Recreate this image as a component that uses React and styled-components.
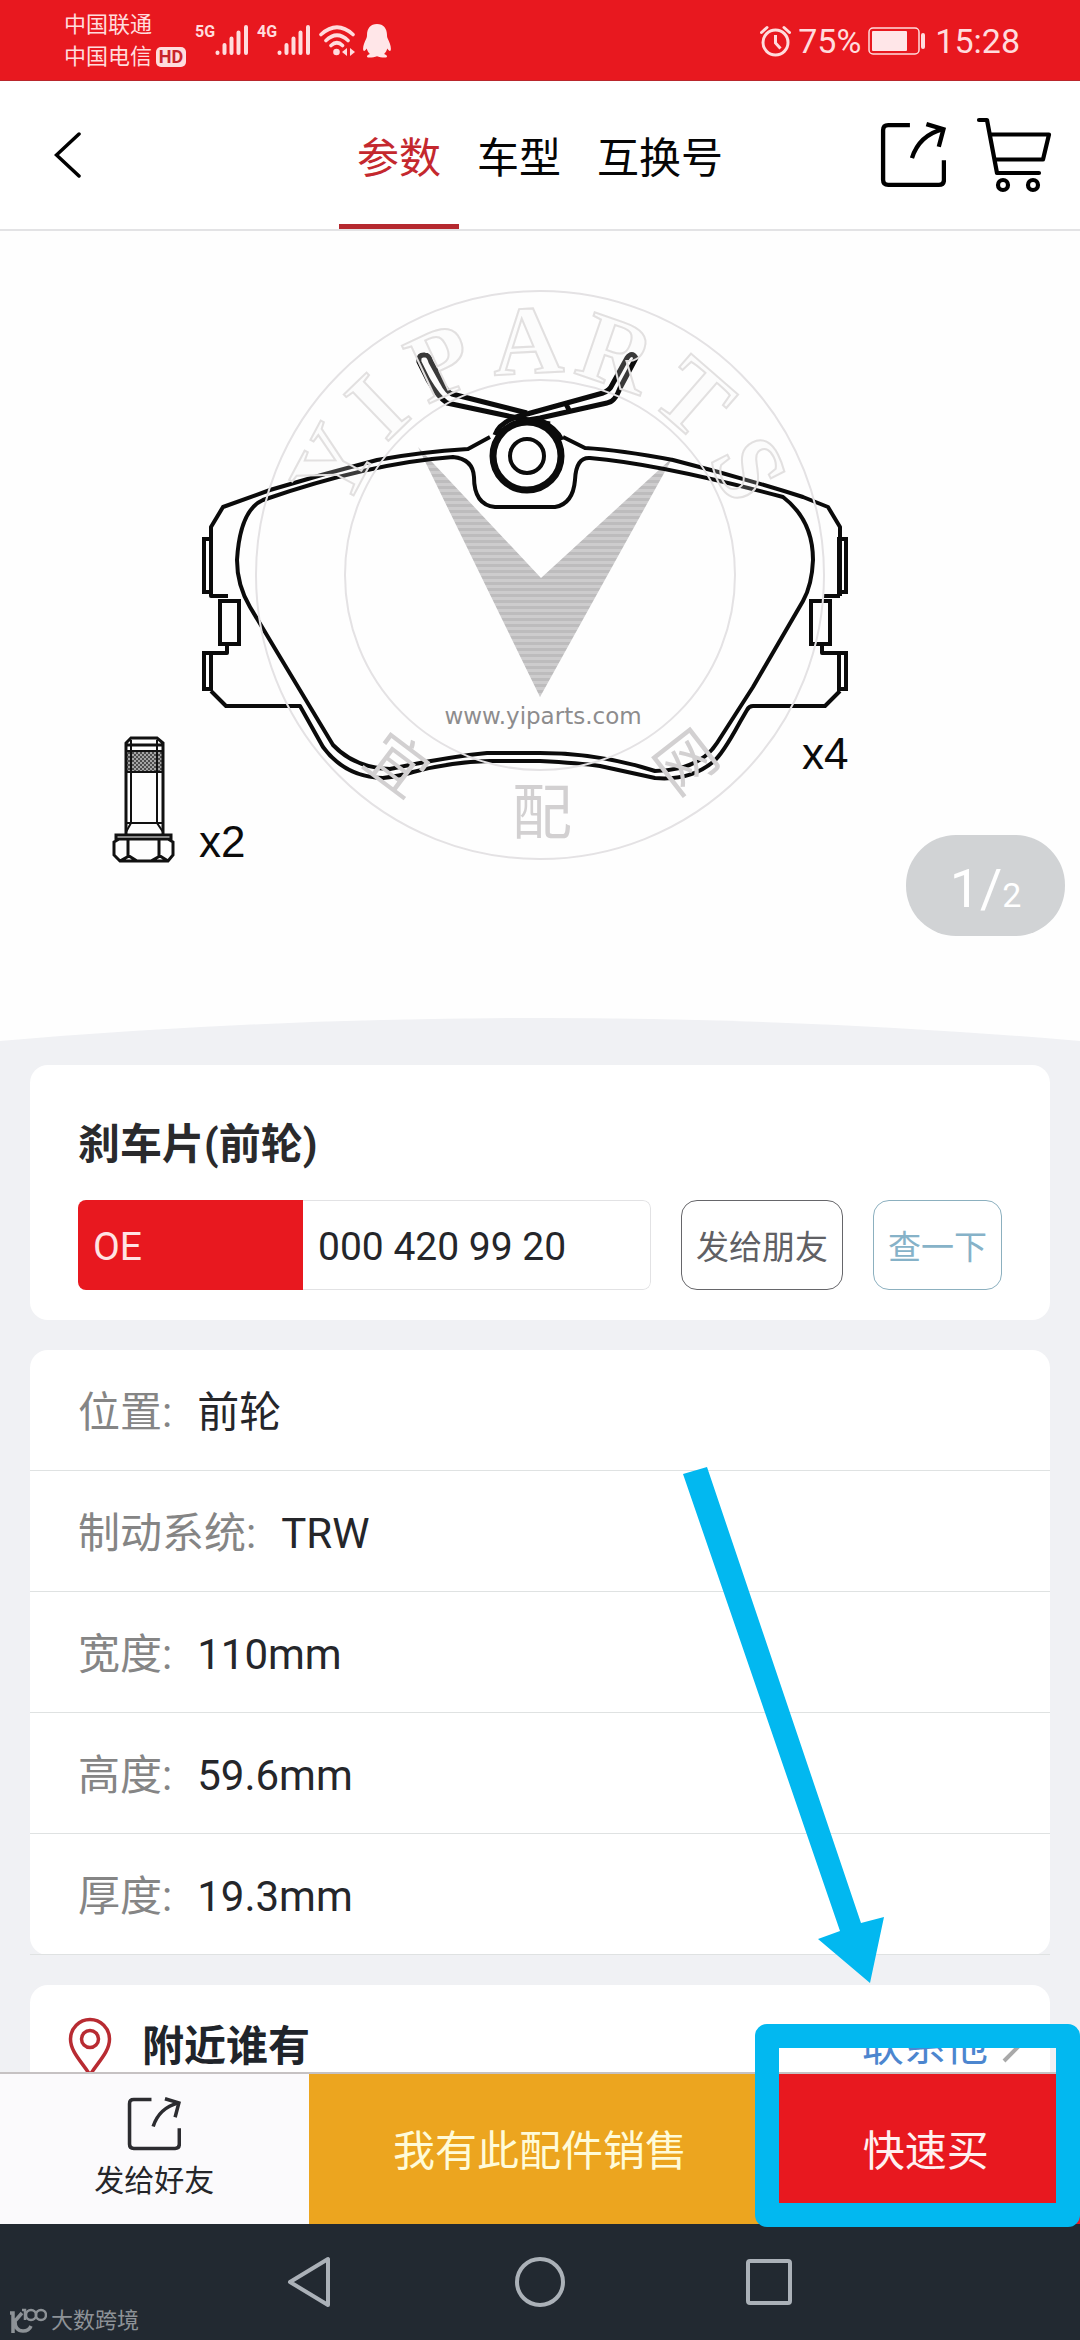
import React from "react";
import styled, { createGlobalStyle } from "styled-components";

const GlobalStyle = createGlobalStyle`
  *, *::before, *::after { box-sizing: border-box; }
  body {
    margin: 0;
    background: #f0f1f4;
    color: #25262a;
    font-family: Roboto, "Noto Sans CJK SC", sans-serif;
  }
  button, input {
    margin: 0;
    padding: 0;
    border: 0;
    background: none;
    color: inherit;
    font: inherit;
    cursor: pointer;
  }
  a { color: inherit; text-decoration: none; }
  svg { display: block; flex: none; }
`;

const Page = styled.div`
  display: flex;
  flex-direction: column;
  height: 100vh;
  overflow: hidden;
`;

/* ---------- status bar ---------- */

const StatusBar = styled.div`
  flex: none;
  display: flex;
  align-items: flex-start;
  justify-content: space-between;
  height: 81px;
  padding: 9px 60px 0 64px;
  background: #e8181f;
  border-bottom: 1px solid #b9262c;
  color: #ffdcdd;
`;

const StatusGroup = styled.div`
  display: flex;
  align-items: ${(p) => p.$align || "center"};
  gap: ${(p) => p.$gap}px;
`;

const Carriers = styled.div`
  display: flex;
  flex-direction: column;
  font-size: 22px;
  line-height: 32px;
`;

const Carrier = styled.div`
  display: flex;
  align-items: center;
  gap: 4px;
`;

const HdBadge = styled.span`
  width: 30px;
  border-radius: 5px;
  background: #ffdcdd;
  color: #c8242a;
  font-size: 18px;
  font-weight: 700;
  line-height: 20px;
  text-align: center;
`;

const Radios = styled.div`
  display: flex;
  align-items: flex-start;
  gap: 8px;
  padding-top: 15px;
`;

const Signal = styled.div`
  display: flex;
  align-items: flex-start;
  font-size: 16px;
  font-weight: 700;
  line-height: 16px;
`;

const StatusInfo = styled(StatusGroup)`
  padding-top: 14px;
  font-size: 34px;
  line-height: 36px;
`;

/* ---------- header ---------- */

const Header = styled.header`
  flex: none;
  display: grid;
  grid-template-columns: 1fr auto 1fr;
  align-items: center;
  height: 150px;
  background: #fff;
  border-bottom: 2px solid #e3e3e5;
`;

const IconButton = styled.button`
  display: block;
`;

const HeaderStart = styled.div`
  padding-left: 54px;
`;

const Tabs = styled.nav`
  align-self: stretch;
  display: flex;
`;

const Tab = styled.a`
  display: flex;
  align-items: center;
  padding: 12px 18px 0;
  border-bottom: 5px solid ${(p) => (p.$active ? "#b5292f" : "transparent")};
  color: ${(p) => (p.$active ? "#c4282e" : "#060606")};
  font-size: 42px;
  line-height: 60px;
`;

const HeaderActions = styled.div`
  display: flex;
  align-items: center;
  justify-content: flex-end;
  gap: 30px;
  padding-right: 28px;
`;

/* ---------- content ---------- */

const Main = styled.main`
  flex: 1;
  min-height: 0;
  overflow: hidden;
`;

const Hero = styled.section`
  position: relative;
  background: #fefefe;

  > svg {
    width: 100%;
    height: auto;
  }
`;

const Counter = styled.div`
  position: absolute;
  right: 15px;
  bottom: 105px;
  display: flex;
  align-items: baseline;
  justify-content: center;
  width: 159px;
  height: 101px;
  border-radius: 50px;
  background: #d1d3d5;
  color: #fff;
  font-size: 34px;
  line-height: 107px;
`;

const CounterCurrent = styled.span`
  font-size: 54px;
`;

const Cards = styled.div`
  display: flex;
  flex-direction: column;
  gap: 30px;
  padding: 24px 30px;
`;

const Card = styled.section`
  background: #fff;
  border-radius: 18px;
`;

const PartCard = styled(Card)`
  padding: 50px 48px 30px;
`;

const PartTitle = styled.h1`
  margin: 0 0 25px;
  color: #2a2a2c;
  font-size: 42px;
  font-weight: 700;
  line-height: 60px;
`;

const PartRow = styled.div`
  display: flex;
  gap: 30px;
  height: 90px;
`;

const Field = styled.div`
  flex: 1;
  min-width: 0;
  display: flex;
  border-radius: 8px;
  overflow: hidden;
  font-size: 39px;
`;

const FieldLabel = styled.label`
  flex: none;
  display: flex;
  align-items: center;
  width: 225px;
  padding: 4px 15px 0;
  background: #e8181f;
  color: #ffe4e4;
`;

const FieldInput = styled.input`
  flex: 1;
  min-width: 0;
  padding: 4px 15px 0;
  border: 1px solid #e2e2e4;
  border-left: 0;
  border-radius: 0 8px 8px 0;
`;

const OutlineButton = styled.button`
  flex: none;
  padding: 0 14px;
  border: 1px solid ${(p) => p.$border};
  border-radius: 16px;
  color: ${(p) => p.$color};
  font-size: 33px;
`;

const Specs = styled.dl`
  margin: 0;
  background: #fff;
  border-radius: 18px;
`;

const Spec = styled.div`
  display: flex;
  align-items: center;
  gap: 25px;
  height: 121px;
  padding: 5px 48px 0;
  border-bottom: 1px solid #dfe2e2;
  font-size: 42px;
  line-height: 60px;
`;

const SpecName = styled.dt`
  color: #858585;
`;

const SpecValue = styled.dd`
  margin: 0;
`;

const NearbyRow = styled.div`
  display: flex;
  align-items: center;
  height: 121px;
  padding: 2px 30px 0 38px;
  font-size: 42px;
  line-height: 60px;
`;

const NearbyTitle = styled.h2`
  flex: 1;
  margin: 0 0 0 30px;
  color: #20242a;
  font-size: 42px;
  font-weight: 700;
`;

const ContactLink = styled.a`
  display: flex;
  align-items: center;
  gap: 14px;
  color: #4c86cf;
`;

/* ---------- bottom bars ---------- */

const ActionBar = styled.div`
  flex: none;
  display: flex;
  height: 152px;
  border-top: 2px solid #c6c2c3;
`;

const ActionCell = styled.div`
  position: relative;
  flex: ${(p) => p.$grow} 1 0;
  display: flex;
`;

const ShareAction = styled.button`
  flex: 1;
  display: flex;
  flex-direction: column;
  align-items: center;
  gap: 9px;
  padding-top: 23px;
  background: #fbfafc;
  font-size: 30px;
  line-height: 42px;
`;

const SolidAction = styled.button`
  flex: 1;
  padding-bottom: 3px;
  background: ${(p) => p.$bg};
  color: ${(p) => p.$color};
  font-size: 42px;
`;

const Highlight = styled.div`
  position: absolute;
  inset: -50px 0 -3px -16px;
  z-index: 2;
  border: 24px solid #02b8f0;
  border-radius: 12px;
  pointer-events: none;
`;

const Arrow = styled.svg`
  position: absolute;
  right: 196px;
  bottom: 241px;
  z-index: 2;
  pointer-events: none;
`;

const NavBar = styled.nav`
  position: relative;
  flex: none;
  display: flex;
  align-items: center;
  justify-content: center;
  gap: 180px;
  height: 116px;
  background: #222931;
`;

const SiteMark = styled.div`
  position: absolute;
  left: 9px;
  bottom: 4px;
  display: flex;
  align-items: center;
  gap: 4px;
  color: #8d9297;
  font-size: 22px;
  line-height: 30px;
`;

/* ---------- icons ---------- */

const SignalBars = () => (
  <svg width="34" height="32" viewBox="0 0 34 32" stroke="currentColor" strokeWidth="4" strokeLinecap="round">
    <path d="M2.5 28.5V29M9.500 21V29M16.500 14.500V29M23.500 8.500V29M31 3V29" />
  </svg>
);

const WifiIcon = () => (
  <svg width="36" height="32" viewBox="0 0 36 32" fill="none" stroke="currentColor" strokeWidth="3.600" strokeLinecap="round">
    <path d="M2 10.500Q18-4 34 10.500M7 16.500Q18 6 29 16.500M12 21.500Q18 16 23.500 21.500" />
    <circle cx="17.500" cy="28" r="3.300" fill="currentColor" stroke="none" />
    <path d="M28 24v8l-5-4zM31 24v8l5-4z" fill="currentColor" stroke="none" />
  </svg>
);

const PenguinIcon = () => (
  <svg width="28" height="34" viewBox="0 0 28 34" fill="#ffe6e8">
    <path d="M14 0C7.500 0 4 4.500 4 11c0 1.500-.2 2.500-.8 3.800C1.300 18.500-.5 23.500.3 26.300c.5 1.500 2 .6 3.400-1.700.6 2.200 1.600 4 3.200 5.500-1.500.5-2.700 1.200-2.900 2.300-.1.800.6 1.100 2 1.100 3.500 0 6-.3 8-1.300 2 1 4.500 1.300 8 1.300 1.400 0 2.100-.3 2-1.100-.2-1.100-1.400-1.800-2.900-2.300 1.600-1.500 2.600-3.300 3.200-5.500 1.400 2.300 2.900 3.200 3.400 1.700.8-2.800-1-7.800-2.900-11.500C24.200 13.500 24 12.500 24 11 24 4.500 20.500 0 14 0z" />
  </svg>
);

const AlarmIcon = () => (
  <svg width="31" height="32" viewBox="0 0 31 32" fill="none" stroke="currentColor" strokeWidth="3">
    <circle cx="15.500" cy="17.500" r="12.500" />
    <path d="M15.500 10v8l5 5.500" />
    <path d="M1.500 7.500 7 2.500M29.500 7.500 24 2.500" strokeLinecap="round" />
  </svg>
);

const BatteryIcon = () => (
  <svg width="60" height="28" viewBox="0 0 60 28">
    <rect x="1" y="1" width="50" height="26" rx="4" fill="none" stroke="currentColor" strokeWidth="1.500" />
    <rect x="4" y="4" width="35" height="20" rx="1" fill="#ffe6e8" />
    <rect x="53" y="6" width="4" height="16" rx="2" fill="currentColor" />
  </svg>
);

const BackIcon = () => (
  <svg width="28" height="46" viewBox="0 0 28 46" fill="none" stroke="#000" strokeWidth="3.500" strokeLinecap="round">
    <path d="M25 2 2.500 23 25 44" />
  </svg>
);

const ShareIcon = ({ size, color }) => (
  <svg width={size} height={size} viewBox="0 0 64 64" fill="none" stroke={color} strokeWidth="4.200">
    <path d="M29 3H8Q3 3 3 8V56Q3 61 8 61H57Q62 61 62 56V37" />
    <path d="M31 35Q38 13 61 7" />
    <path d="M45 2 61.500 7 57 24" />
  </svg>
);

const CartIcon = () => (
  <svg width="76" height="76" viewBox="0 0 76 76" fill="none" stroke="#000" strokeWidth="4.200" strokeLinejoin="round" strokeLinecap="round">
    <path d="M3 3H11L21 56H63M14 17.500H73L67 42.500H19" />
    <circle cx="27" cy="68" r="5" />
    <circle cx="57" cy="68" r="5" />
  </svg>
);

const PinIcon = () => (
  <svg width="44" height="60" viewBox="0 0 44 60" fill="none" stroke="#b82b32" strokeWidth="3.500" strokeLinejoin="round">
    <path d="M22 58C14 45 2.500 35 2.500 22A19.500 19.500 0 0 1 41.500 22C41.500 35 30 45 22 58Z" />
    <circle cx="22" cy="22" r="8.500" />
  </svg>
);

const ChevronIcon = () => (
  <svg width="18" height="32" viewBox="0 0 18 32" fill="none" stroke="#a9a9a9" strokeWidth="4">
    <path d="M2 2 16 16 2 30" />
  </svg>
);

const arcLetters = [
  ["Y", -62],
  ["I", -44],
  ["P", -25],
  ["A", -3],
  ["R", 19],
  ["T", 41],
  ["S", 63],
];

const PartDrawing = () => (
  <svg viewBox="0 231 1080 810" role="img" aria-label="刹车片">
    <defs>
      <pattern id="stripes" width="6" height="6" patternUnits="userSpaceOnUse">
        <rect width="6" height="6" fill="#cdcccd" />
        <rect width="6" height="3" fill="#bdbcbd" />
      </pattern>
      <pattern id="thread" width="4" height="4" patternUnits="userSpaceOnUse">
        <rect width="4" height="4" fill="#a5a5a5" />
        <rect width="2" height="2" fill="#4c4c4c" />
        <rect x="2" y="2" width="2" height="2" fill="#4c4c4c" />
      </pattern>
    </defs>

    <path d="M418 447 541 578 673 457 540 697Z" fill="url(#stripes)" />

    <g fill="none" stroke="#0b0b0b" strokeWidth="4" strokeLinejoin="round">
      {/* backing plate */}
      <path d="M490 437 468 449Q420 452 377 460 323 474 270 490L223 507 211 527V596H228M227 646V653H204M211 691 226 706H300L323 747Q345 777 383 778 400 776 413 772 450 762 490 761H540Q580 763 600 766L655 778Q690 781 713 762 722 755 740 722L747 710Q749 706 753 706H825L840 691M822 646V653H846M840 596V527L828 507 803 497Q740 477 673 460 620 450 585 448L563 437" />
      <path d="M840 596H823" />
      {/* friction material */}
      <path d="M453 457Q473 459 474 477 474 505 495 507H555Q573 504 575 480 576 457 590 458 660 464 783 497 813 520 813 560 812 585 803 601L753 687 717 743Q700 770 655 771 600 753 540 753H487Q447 757 390 769 355 768 333 745L280 657 250 607Q237 585 237 560 240 510 263 500 370 463 453 457Z" />
      <path d="M204 539H211V592H204ZM204 653H211V689H204ZM839 539H846V592H839ZM839 653H846V689H839Z" strokeLinejoin="miter" />
      <path d="M220 601H239V644H220ZM811 601H830V644H811Z" strokeLinejoin="miter" />
      {/* retaining spring */}
      <g strokeWidth="5">
        <path d="M550 424 513 417 447 403Q438 397 428 380L419 362Q418 354 425 355 429 355 431 362L442 382Q447 392 452 394L527 413" />
        <path d="M495 435Q500 420 527 414L603 393Q610 390 612 385L627 358Q632 351 636 358L620 388Q615 402 607 403L540 418Q510 422 498 436M566 404 570 412" />
        <path d="M540 420Q556 428 562 440" />
      </g>
      <circle cx="527" cy="456" r="34" strokeWidth="7" />
      <circle cx="527" cy="456" r="17" />
    </g>

    {/* bolt */}
    <g fill="none" stroke="#111" strokeWidth="2">
      <rect x="127" y="751" width="35" height="21" fill="url(#thread)" stroke="none" />
      <path d="M126 834V743L131 738H157L163 743V834M126 745H163" strokeWidth="3" />
      <path d="M126 751H163M126 772H163M126 823H163M131 740V823L126 832M157 740V823L163 832" />
      <path d="M116 835H171V839H116ZM119 839H168L173 842V855L168 861H120L114 855V842ZM128 840V857M159 840V857M120 861 129 856 137 861M151 861 160 856 168 861" strokeWidth="3" />
    </g>

    <g fill="#0b0b0b" fontFamily="'Liberation Sans', sans-serif" fontSize="44">
      <text x="199" y="857">x2</text>
      <text x="802" y="769">x4</text>
    </g>

    {/* ring watermark */}
    <g fill="none" stroke="#e4e2e4" strokeWidth="2">
      <circle cx="540" cy="575" r="284" />
      <circle cx="540" cy="575" r="195" />
    </g>
    <g fill="#f4f3f3" fillOpacity="0.2" stroke="#e2e0e0" strokeWidth="2" fontFamily="'Liberation Serif', serif" fontSize="98" fontWeight="700" textAnchor="middle">
      {arcLetters.map(([letter, angle]) => (
        <text key={letter} x="540" y="373" transform={`rotate(${angle} 540 575)`}>
          {letter}
        </text>
      ))}
    </g>
    <g fill="#d2d0d1" fontFamily="'Noto Sans CJK SC', sans-serif" fontSize="60" fontWeight="400" textAnchor="middle">
      <text x="540" y="834" transform="rotate(37 540 575)">宜</text>
      <text x="542" y="834">配</text>
      <text x="540" y="834" transform="rotate(-38 540 575)">网</text>
    </g>
    <text x="543" y="724" fill="#8d8c8d" fontFamily="'DejaVu Sans', sans-serif" fontSize="23" textAnchor="middle">
      www.yiparts.com
    </text>

    <path d="M0 1041Q540 995 1080 1041Z" fill="#f0f1f4" />
  </svg>
);

const specs = [
  ["位置", "前轮"],
  ["制动系统", "TRW"],
  ["宽度", "110mm"],
  ["高度", "59.6mm"],
  ["厚度", "19.3mm"],
];

export default function App() {
  return (
    <Page>
      <GlobalStyle />
      <StatusBar>
        <StatusGroup $gap={9} $align="flex-start">
          <Carriers>
            <Carrier>中国联通</Carrier>
            <Carrier>
              中国电信<HdBadge>HD</HdBadge>
            </Carrier>
          </Carriers>
          <Radios>
            <Signal>
              5G
              <SignalBars />
            </Signal>
            <Signal>
              4G
              <SignalBars />
            </Signal>
            <WifiIcon />
            <PenguinIcon />
          </Radios>
        </StatusGroup>
        <StatusInfo $gap={7}>
          <AlarmIcon />
          <span>75%</span>
          <BatteryIcon />
          <span>15:28</span>
        </StatusInfo>
      </StatusBar>

      <Header>
        <HeaderStart>
          <IconButton type="button" aria-label="返回">
            <BackIcon />
          </IconButton>
        </HeaderStart>
        <Tabs>
          <Tab href="#params" $active>参数</Tab>
          <Tab href="#models">车型</Tab>
          <Tab href="#numbers">互换号</Tab>
        </Tabs>
        <HeaderActions>
          <IconButton type="button" aria-label="分享">
            <ShareIcon size={66} color="#000" />
          </IconButton>
          <IconButton type="button" aria-label="购物车">
            <CartIcon />
          </IconButton>
        </HeaderActions>
      </Header>

      <Main>
        <Hero>
          <PartDrawing />
          <Counter>
            <CounterCurrent>1/</CounterCurrent>2
          </Counter>
        </Hero>

        <Cards>
          <PartCard>
            <PartTitle>刹车片(前轮)</PartTitle>
            <PartRow>
              <Field>
                <FieldLabel htmlFor="oe">OE</FieldLabel>
                <FieldInput id="oe" type="text" readOnly value="000 420 99 20" />
              </Field>
              <OutlineButton type="button" $border="#66666a" $color="#606064">
                发给朋友
              </OutlineButton>
              <OutlineButton type="button" $border="#8cb0bf" $color="#86b2c8">
                查一下
              </OutlineButton>
            </PartRow>
          </PartCard>

          <Specs>
            {specs.map(([name, value]) => (
              <Spec key={name}>
                <SpecName>{name}:</SpecName>
                <SpecValue>{value}</SpecValue>
              </Spec>
            ))}
          </Specs>

          <Card>
            <NearbyRow>
              <PinIcon />
              <NearbyTitle>附近谁有</NearbyTitle>
              <ContactLink href="#contact">
                联系他
                <ChevronIcon />
              </ContactLink>
            </NearbyRow>
          </Card>
        </Cards>
      </Main>

      <ActionBar>
        <ActionCell $grow={2}>
          <ShareAction type="button">
            <ShareIcon size={54} color="#2c2c30" />
            发给好友
          </ShareAction>
        </ActionCell>
        <ActionCell $grow={3}>
          <SolidAction type="button" $bg="#eca51f" $color="#fffbd8">
            我有此配件销售
          </SolidAction>
        </ActionCell>
        <ActionCell $grow={2}>
          <SolidAction type="button" $bg="#e8181f" $color="#fff0f0">
            快速买
          </SolidAction>
          <Highlight />
          <Arrow width="201" height="516" viewBox="0 0 201 516" fill="#02b8f0">
            <path d="M0 7 24 0 178 456 201 450 187 516 135 472 157 464Z" />
          </Arrow>
        </ActionCell>
      </ActionBar>

      <NavBar>
        <IconButton type="button" aria-label="后退">
          <svg width="50" height="52" viewBox="0 0 50 52" fill="none" stroke="#abb1b8" strokeWidth="4" strokeLinejoin="round">
            <path d="M43 3V49L5 26Z" />
          </svg>
        </IconButton>
        <IconButton type="button" aria-label="主页">
          <svg width="50" height="50" viewBox="0 0 50 50" fill="none" stroke="#abb1b8" strokeWidth="4">
            <circle cx="25" cy="25" r="23" />
          </svg>
        </IconButton>
        <IconButton type="button" aria-label="最近任务">
          <svg width="50" height="50" viewBox="0 0 50 50" fill="none" stroke="#abb1b8" strokeWidth="4">
            <rect x="3" y="4" width="42" height="42" rx="2" />
          </svg>
        </IconButton>
        <SiteMark>
          <svg width="38" height="26" viewBox="0 0 38 26" fill="none" stroke="currentColor" strokeWidth="2.500">
            <path d="M1 5H4V25M13 5 6 13Q6 23 14 23 20 23 22 18" strokeWidth="3.500" />
            <path d="M13 2H16V12" />
            <circle cx="22" cy="7" r="5" />
            <circle cx="32" cy="7" r="5" />
          </svg>
          大数跨境
        </SiteMark>
      </NavBar>
    </Page>
  );
}
